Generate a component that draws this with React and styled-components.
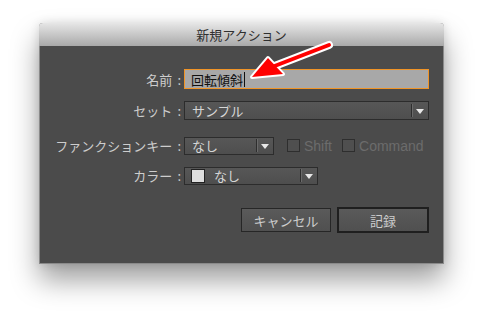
import React from 'react';
import styled, { createGlobalStyle } from 'styled-components';

const GlobalStyle = createGlobalStyle`
  html, body {
    margin: 0;
    padding: 0;
    background: #ffffff;
  }
  body {
    font-family: "Liberation Sans", "Noto Sans CJK JP", sans-serif;
    -webkit-font-smoothing: antialiased;
  }
`

const Page = styled.div`
  position: relative;
  width: 484px;
  height: 319px;
  padding: 23px 40px 0 39px;
  box-sizing: border-box;
  overflow: hidden;
`

const Dialog = styled.div`
  width: 405px;
  height: 241px;
  background: #4b4b4b;
  border: 1px solid #8a8a8a;
  border-top: none;
  box-sizing: border-box;
  border-radius: 4px 4px 0 0;
  box-shadow: 0 16px 28px rgba(0, 0, 0, 0.38), 0 0 10px rgba(0, 0, 0, 0.12);
  display: flex;
  flex-direction: column;
`

const TitleBar = styled.div`
  height: 23px;
  flex: none;
  border-radius: 4px 4px 0 0;
  background: linear-gradient(#e6e6e6, #a9a9a9);
  display: flex;
  align-items: center;
  justify-content: center;
  font-family: "Noto Sans CJK JP", sans-serif;
  font-size: 13px;
  color: #2f2f2f;
  margin: 0 -1px;
`

const Body = styled.div`
  padding: 23px 14px 0 0;
  display: flex;
  flex-direction: column;
`

const Row = styled.div`
  display: grid;
  grid-template-columns: 141px auto 1fr;
  align-items: center;
  margin-top: ${p => p.gap || 0}px;
  height: ${p => p.h}px;
`

const Label = styled.div`
  justify-self: end;
  font-family: "Noto Sans CJK JP", sans-serif;
  font-size: 13px;
  color: #cdcdcd;
  white-space: nowrap;
  span {
    margin-left: 5px;
  }
`

const Controls = styled.div`
  grid-column: 2 / 4;
  display: flex;
  align-items: center;
  padding-left: 3px;
`

const NameInput = styled.div`
  width: 246px;
  height: 20px;
  box-sizing: border-box;
  border: 1px solid #f09427;
  background: #a8a8a8;
  display: flex;
  align-items: center;
  padding-left: 6px;
  font-family: "Noto Sans CJK JP", sans-serif;
  font-size: 13px;
  color: #111;
`

const Caret = styled.span`
  display: inline-block;
  width: 1px;
  height: 15px;
  background: #111;
  margin-left: 1px;
`

const Select = styled.div`
  width: ${p => p.w}px;
  height: ${p => p.h}px;
  box-sizing: border-box;
  border: 1px solid #2c2c2c;
  background: linear-gradient(#575757, #4e4e4e);
  display: flex;
  align-items: center;
  font-family: "Noto Sans CJK JP", sans-serif;
  font-size: 13px;
  color: #d6d6d6;
`

const SelectValue = styled.div`
  flex: 1;
  display: flex;
  align-items: center;
  padding-left: ${p => p.pl || 7}px;
  gap: 9px;
`

const Divider = styled.div`
  width: 1px;
  height: 13px;
  background: #2e2e2e;
  box-shadow: 1px 0 0 #6a6a6a;
`

const Arrow = styled.div`
  width: 16px;
  display: flex;
  justify-content: center;
  &::after {
    content: "";
    border-left: 4px solid transparent;
    border-right: 4px solid transparent;
    border-top: 5px solid #e8e8e8;
    margin-top: 1px;
  }
`

const Swatch = styled.div`
  width: 12px;
  height: 12px;
  background: #dedede;
  border: 1px solid #222;
`

const Check = styled.div`
  display: flex;
  align-items: center;
  margin-left: ${p => p.ml}px;
  font-family: "Liberation Sans", sans-serif;
  font-size: 14px;
  color: #6c6c6c;
  gap: 4px;
`

const Box = styled.div`
  width: 11px;
  height: 11px;
  border: 1px solid #2e2e2e;
  background: #4f4f4f;
`

const ButtonRow = styled.div`
  display: flex;
  justify-content: flex-end;
  gap: 6px;
  margin-top: 24px;
`

const Button = styled.div`
  width: ${p => p.w}px;
  height: ${p => p.primary ? 26 : 24}px;
  margin-top: ${p => p.primary ? -1 : 0}px;
  box-sizing: border-box;
  border: ${p => p.primary ? '2px solid #1f1f1f' : '1px solid #262626'};
  background: linear-gradient(#5a5a5a, #505050);
  display: flex;
  align-items: center;
  justify-content: center;
  font-family: "Noto Sans CJK JP", sans-serif;
  font-size: 13px;
  color: #cdcdcd;
`

const Pointer = styled.svg`
  position: absolute;
  left: 0;
  top: 0;
  pointer-events: none;
`

const App = () => {
  return (<Page>
    <GlobalStyle />
    <Dialog>
      <TitleBar>新規アクション</TitleBar>
      <Body>
        <Row h={20}>
          <Label>名前<span>:</span></Label>
          <Controls>
            <NameInput>回転傾斜<Caret /></NameInput>
          </Controls>
        </Row>
        <Row h={19} gap={12}>
          <Label>セット<span>:</span></Label>
          <Controls>
            <Select w={245} h={19}>
              <SelectValue>サンプル</SelectValue>
              <Divider />
              <Arrow />
            </Select>
          </Controls>
        </Row>
        <Row h={18} gap={16}>
          <Label>ファンクションキー<span>:</span></Label>
          <Controls>
            <Select w={90} h={18}>
              <SelectValue>なし</SelectValue>
              <Divider />
              <Arrow />
            </Select>
            <Check ml={13}><Box />Shift</Check>
            <Check ml={10}><Box />Command</Check>
          </Controls>
        </Row>
        <Row h={18} gap={12}>
          <Label>カラー<span>:</span></Label>
          <Controls>
            <Select w={134} h={18}>
              <SelectValue pl={6}><Swatch />なし</SelectValue>
              <Divider />
              <Arrow />
            </Select>
          </Controls>
        </Row>
        <ButtonRow>
          <Button w={90}>キャンセル</Button>
          <Button w={92} primary>記録</Button>
        </ButtonRow>
      </Body>
    </Dialog>
    <Pointer width="484" height="319" viewBox="0 0 484 319">
      <g strokeLinejoin="round" strokeLinecap="round">
        <path d="M329 45 L272 67" stroke="#fff" strokeWidth="8" />
        <path d="M252 77 L268 58 L283 74 Z" fill="#fff" stroke="#fff" strokeWidth="4" />
        <path d="M329 45 L272 67" stroke="#f00" strokeWidth="4" />
        <path d="M252 77 L268 58 L283 74 Z" fill="#f00" />
      </g>
    </Pointer>
  </Page>);
}

export default App;
